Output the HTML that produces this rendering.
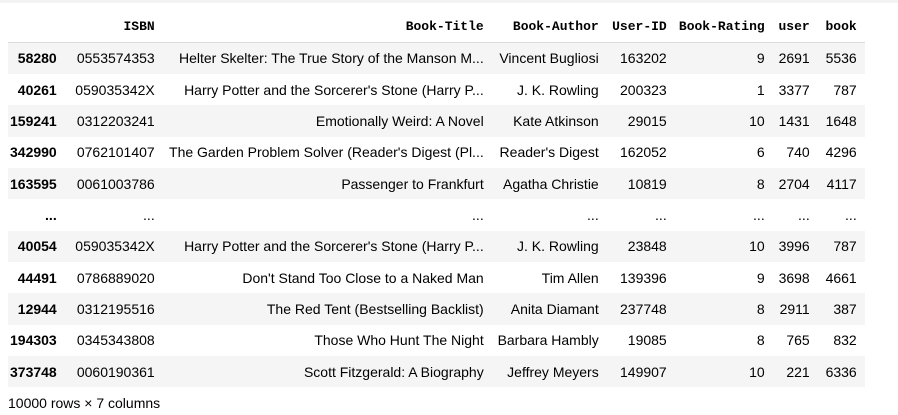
<!DOCTYPE html>
<html><head><meta charset="utf-8"><style>
body{margin:0;background:#fff;width:898px;height:415px;overflow:hidden;font-family:"Liberation Sans",sans-serif;font-size:14px;color:#000}
.top{height:3px;background:#f3f3f3}
table{position:absolute;left:8px;top:10px;border-collapse:collapse;table-layout:fixed}
td,th{padding:0 8px 0 2px;text-align:right;white-space:nowrap;overflow:hidden}
thead th{font-family:"Liberation Mono",monospace;font-weight:bold;font-size:13px;height:32px;border-bottom:1px solid #ddd;vertical-align:middle}
tbody tr{height:31.36px}
tbody tr:nth-child(odd){background:#f5f5f5}
tbody th{font-weight:bold}
.foot{position:absolute;left:8px;top:395px;font-size:14px}
</style></head><body>
<div class="top"></div>
<table>
<colgroup><col style="width:54px"><col style="width:98px"><col style="width:329px"><col style="width:115px"><col style="width:68px"><col style="width:98px"><col style="width:45px"><col style="width:47px"></colgroup>
<thead><tr><th></th><th>ISBN</th><th>Book-Title</th><th>Book-Author</th><th>User-ID</th><th>Book-Rating</th><th>user</th><th>book</th></tr></thead>
<tbody>
<tr><th>58280</th><td>0553574353</td><td>Helter Skelter: The True Story of the Manson M...</td><td>Vincent Bugliosi</td><td>163202</td><td>9</td><td>2691</td><td>5536</td></tr>
<tr><th>40261</th><td>059035342X</td><td>Harry Potter and the Sorcerer's Stone (Harry P...</td><td>J. K. Rowling</td><td>200323</td><td>1</td><td>3377</td><td>787</td></tr>
<tr><th>159241</th><td>0312203241</td><td>Emotionally Weird: A Novel</td><td>Kate Atkinson</td><td>29015</td><td>10</td><td>1431</td><td>1648</td></tr>
<tr><th>342990</th><td>0762101407</td><td>The Garden Problem Solver (Reader's Digest (Pl...</td><td>Reader's Digest</td><td>162052</td><td>6</td><td>740</td><td>4296</td></tr>
<tr><th>163595</th><td>0061003786</td><td>Passenger to Frankfurt</td><td>Agatha Christie</td><td>10819</td><td>8</td><td>2704</td><td>4117</td></tr>
<tr><th>...</th><td>...</td><td>...</td><td>...</td><td>...</td><td>...</td><td>...</td><td>...</td></tr>
<tr><th>40054</th><td>059035342X</td><td>Harry Potter and the Sorcerer's Stone (Harry P...</td><td>J. K. Rowling</td><td>23848</td><td>10</td><td>3996</td><td>787</td></tr>
<tr><th>44491</th><td>0786889020</td><td>Don't Stand Too Close to a Naked Man</td><td>Tim Allen</td><td>139396</td><td>9</td><td>3698</td><td>4661</td></tr>
<tr><th>12944</th><td>0312195516</td><td>The Red Tent (Bestselling Backlist)</td><td>Anita Diamant</td><td>237748</td><td>8</td><td>2911</td><td>387</td></tr>
<tr><th>194303</th><td>0345343808</td><td>Those Who Hunt The Night</td><td>Barbara Hambly</td><td>19085</td><td>8</td><td>765</td><td>832</td></tr>
<tr><th>373748</th><td>0060190361</td><td>Scott Fitzgerald: A Biography</td><td>Jeffrey Meyers</td><td>149907</td><td>10</td><td>221</td><td>6336</td></tr>
</tbody></table>
<div class="foot">10000 rows × 7 columns</div>
</body></html>
